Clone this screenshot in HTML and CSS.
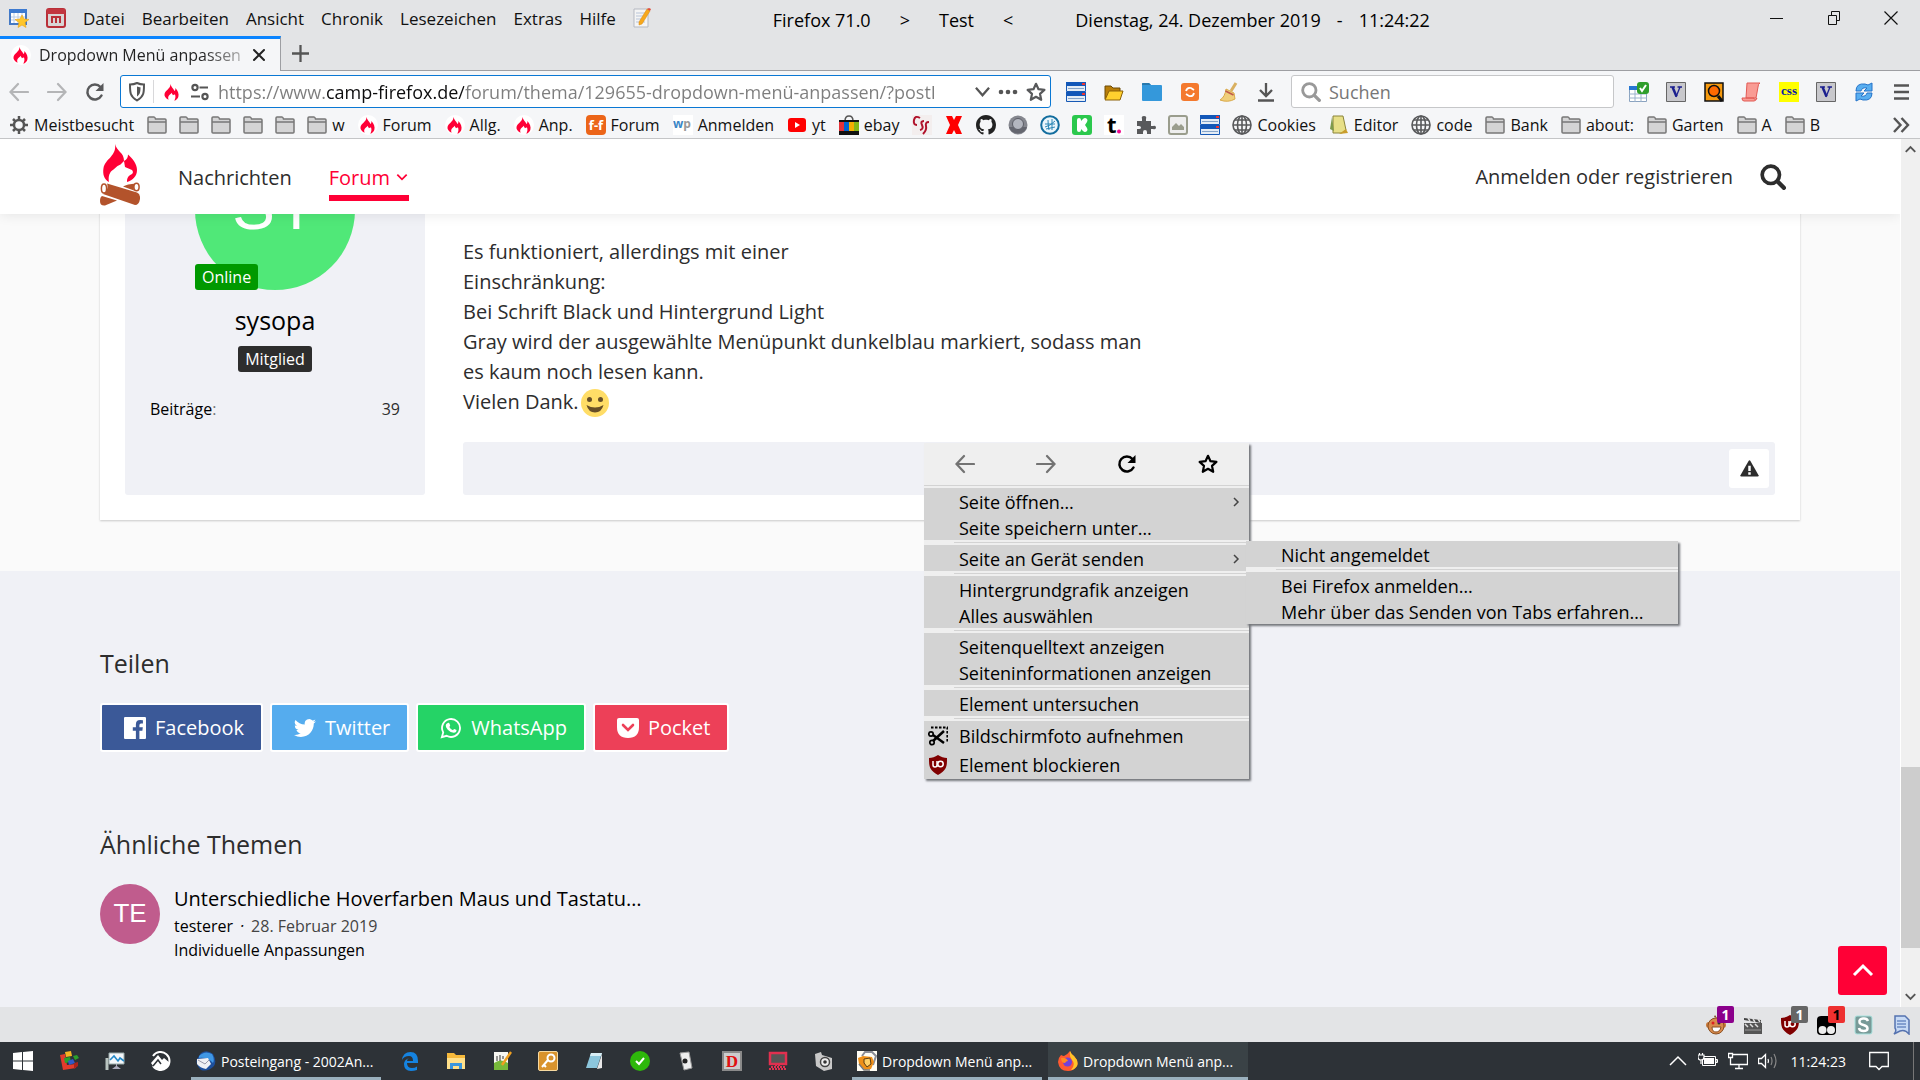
FILE: index.html
```html
<!DOCTYPE html>
<html lang="de">
<head>
<meta charset="utf-8">
<title>Dropdown Menü anpassen</title>
<link rel="stylesheet" href="styles.css">
</head>
<body>
<svg class="defs" aria-hidden="true">
  <symbol id="folder" viewBox="0 0 20 20"><path d="M1 17V3q0-1 1-1h5q1 0 1.500 2H18q1 0 1 1v12q0 1-1 1H2q-1 0-1-1z" fill="#d4d4d5" stroke="#777" stroke-width="1.500"/><path d="M1 7h18" stroke="#777" stroke-width="1.500"/></symbol>
  <symbol id="flame" viewBox="0 0 20 20"><circle cx="10" cy="10" r="10" fill="#fff"/><path d="M8.500 2c.5 3 3 4.500 4 7 1-.5.900-2 .8-3 2.500 2.500 4 6 3 9-.7 2-2 3-4 3.800 1.200-2.500 1.500-4.500.7-6.300-.8-.3-1.300.5-2 .8-.5-.8-1-1.500-1.700-2.500 0 1.500-2.500 2-3 4-.3 1 0 2.200.3 3C4 16.500 2 14.500 2.500 12c.7-3.800 6-5 6-10z" fill="#ff0036"/></symbol>
  <symbol id="back" viewBox="0 0 20 20"><path d="M19 10H2M9 2L1.500 10 9 18" fill="none" stroke="currentColor" stroke-width="2.200" stroke-linecap="round"/></symbol>
  <symbol id="forward" viewBox="0 0 20 20"><path d="M1 10h17M11 2l7.500 8-7.500 8" fill="none" stroke="currentColor" stroke-width="2.200" stroke-linecap="round"/></symbol>
  <symbol id="reload" viewBox="0 0 20 20"><path d="M16.500 13.500a7.500 7.500 0 1 1-1-8.500" fill="none" stroke="currentColor" stroke-width="2.500" stroke-linecap="round"/><path d="M18.500 1v8h-8z" fill="currentColor"/></symbol>
  <symbol id="star" viewBox="0 0 20 20"><path d="M10 1.800l2.500 5.400 5.900.7-4.400 4 1.200 5.900-5.200-3-5.200 3L6 11.900l-4.400-4 5.900-.7z" fill="none" stroke="currentColor" stroke-width="2.200" stroke-linejoin="round"/></symbol>
  <symbol id="windows2" viewBox="0 0 20 20"><path fill="#e4ecf5" d="M1 1h18v18H1z"/><path fill="#1257b8" d="M0 0h20v4H0zM0 10h20v4H0z"/><path d="M.5 1v8.500h19V1M.5 11v8.500h19V11" fill="none" stroke="#1659b5"/><path fill="#e33" d="M16 1h3v2h-3zM16 11h3v2h-3z"/><path stroke="#85a4c9" d="M2 6.500h16M2 16.500h16"/></symbol>
  <symbol id="globe" viewBox="0 0 20 20"><g fill="none" stroke="#58595b" stroke-width="1.600"><circle cx="10" cy="10" r="9"/><ellipse cx="10" cy="10" rx="4.500" ry="9"/><path d="M10 1v18M1 10h18M3 5h14M3 15h14"/></g></symbol>
  <symbol id="vbox" viewBox="0 0 20 20"><path fill="#c8c8cc" stroke="#666" d="M.5.5h19v19H.5z"/><path d="M4 5h5M11.500 5h4.500" stroke="#1b1f8f" stroke-width="1.500"/><path d="M6.500 5l4 9.500" stroke="#1b1f8f" stroke-width="2.500"/><path d="M10 15l4-10" stroke="#1b1f8f" stroke-width="1.300"/></symbol>
  <symbol id="ublock" viewBox="0 0 20 20"><path d="M10 0c3 2 6 3 9 3 0 8 0 12-9 17C1 15 1 11 1 3c3 0 6-1 9-3z" fill="#800000"/><path d="M5 6v4q0 2 2 2t2-2V6m0 0v6" fill="none" stroke="#fff" stroke-width="1.500"/><circle cx="12.500" cy="9" r="2.700" fill="none" stroke="#fff" stroke-width="1.500"/></symbol>
  <symbol id="search" viewBox="0 0 24 24"><circle cx="10" cy="10" r="8" fill="none" stroke="currentColor" stroke-width="3.400"/><path d="M16 16l6 6" stroke="currentColor" stroke-width="4" stroke-linecap="round"/></symbol>
  <symbol id="chev" viewBox="0 0 10 16"><path d="M3 4l4 4-4 4" fill="none" stroke="currentColor" stroke-width="1.500"/></symbol>
</svg>

<header class="menubar">
  <svg class="ic" viewBox="0 0 20 20"><path fill="#fff" stroke="#4579c4" stroke-width="2" d="M1 2h16v14H1z"/><path fill="#3d7ad0" d="M0 1h18v4H0z"/><path stroke="#b9cbe6" d="M5 5v10M9 5v10M13 5v10M2 9h14M2 12h14"/><path fill="#ffc62b" stroke="#eba314" stroke-width=".6" d="M13 7l2 4 5 .5-4 3 1 5-4-2.500-4 2.500 1-5-4-3 5-.5z"/></svg>
  <svg class="ic" viewBox="0 0 20 20"><rect x="1" y="1" width="18" height="18" rx="2" fill="#d9d5d5" stroke="#b92f38" stroke-width="2"/><path fill="#c23640" d="M1 1h18v5H1z"/><path fill="none" stroke="#b92f38" stroke-width="2" d="M6 15V9h4v6m0-6h4v6"/></svg>
  <nav class="menus">
    <button>Datei</button><button>Bearbeiten</button><button>Ansicht</button><button>Chronik</button><button>Lesezeichen</button><button>Extras</button><button>Hilfe</button>
  </nav>
  <svg class="ic" viewBox="0 0 20 20"><path fill="#f4f4f4" stroke="#b5b9c2" d="M1 1h14v18H1z"/><path stroke="#b8c4d8" d="M3 5h9M3 8h8M3 11h6M3 14h9"/><path fill="#f7a81c" stroke="#d98a10" stroke-width=".5" d="M14 1l3 2-8 13-3 1 0-3z"/><path fill="#e04a3a" d="M14 1l3 2 1-2-2-1z"/></svg>
  <div class="wintitle"><span>Firefox 71.0</span><span>&gt;</span><span>Test</span><span>&lt;</span><span class="date">Dienstag, 24. Dezember 2019</span><span class="dash">-</span><span>11:24:22</span></div>
  <div class="wincontrols">
    <button aria-label="Minimieren"><svg viewBox="0 0 14 14"><path d="M0 7.500h13" stroke="#111"/></svg></button>
    <button aria-label="Wiederherstellen"><svg viewBox="0 0 14 14"><path d="M1.500 4.500h8v9h-8zM4.500 4V.5h8v9h-3" fill="none" stroke="#111"/></svg></button>
    <button aria-label="Schließen"><svg viewBox="0 0 14 14"><path d="M.5.5l13 13M13.500.5l-13 13" stroke="#111" stroke-width="1.200"/></svg></button>
  </div>
</header>

<div class="tabs">
  <div class="tab"><svg class="ic"><use href="#flame"/></svg><span class="tabtext">Dropdown Menü anpassen</span><button aria-label="Tab schließen"><svg viewBox="0 0 14 14"><path d="M2 2l10 10M12 2L2 12" stroke="#222" stroke-width="2" stroke-linecap="round"/></svg></button></div>
  <button class="newtab" aria-label="Neuer Tab"><svg viewBox="0 0 18 18"><path d="M9 0v18M0 9h18" stroke="#555" stroke-width="2.400"/></svg></button>
</div>

<div class="toolbar">
  <div class="navbtns">
    <button class="dim" aria-label="Zurück"><svg class="ic"><use href="#back"/></svg></button>
    <button class="dim" aria-label="Vor"><svg class="ic"><use href="#forward"/></svg></button>
    <button aria-label="Neu laden"><svg class="ic"><use href="#reload"/></svg></button>
  </div>
  <div class="urlbar">
    <svg class="shield" viewBox="0 0 16 20"><path d="M8 1c2 1 4 1.500 7 1.500 0 8 0 12-7 16-7-4-7-8-7-16C4 2.500 6 2 8 1z" fill="none" stroke="#555" stroke-width="2"/><path d="M8 4.500c1.500.6 2 .7 3.500.8 0 5-.5 7-3.500 9.200z" fill="#555"/></svg>
    <i class="sep"></i>
    <svg class="ic"><use href="#flame"/></svg>
    <svg class="ic" viewBox="0 0 20 20"><g stroke="#555" stroke-width="2.200" fill="none"><circle cx="5" cy="5.500" r="2.600"/><path d="M9.500 5.500H18M1 14.500h9"/><circle cx="15" cy="14.500" r="2.600"/></g></svg>
    <input class="url" type="text" aria-label="Adresse" value="https://www.camp-firefox.de/forum/thema/129655-dropdown-menü-anpassen/?postI">
    <svg class="urlchev" viewBox="0 0 16 16"><path d="M1 4l7 8 7-8" fill="none" stroke="#555" stroke-width="2.400"/></svg>
    <svg class="ic" viewBox="0 0 20 20"><g fill="#555"><circle cx="3" cy="10" r="2.300"/><circle cx="10" cy="10" r="2.300"/><circle cx="17" cy="10" r="2.300"/></g></svg>
    <svg class="ic grey"><use href="#star"/></svg>
  </div>
  <div class="tools">
    <svg class="ic"><use href="#windows2"/></svg>
    <svg class="ic" viewBox="0 0 20 20"><path d="M1 17V4h6l2 2h7v3" fill="#b87d08" stroke="#6b4a06"/><path d="M1 18L5 9h14l-3 9z" fill="#ffd02e" stroke="#8b6108"/></svg>
    <svg class="ic" viewBox="0 0 20 20"><path d="M0 2q0-1 1-1h6l2 2h10q1 0 1 1v14q0 1-1 1H1q-1 0-1-1z" fill="#3498db"/><path d="M0 2q0-1 1-1h6l2 2H0z" fill="#2878ad"/></svg>
    <svg class="ic" viewBox="0 0 20 20"><rect x="1" y="1" width="18" height="18" rx="3" fill="#f4792e"/><path d="M6 9q1-4 5-3l3 2M14 11q-1 4-5 3l-3-2" fill="none" stroke="#fff" stroke-width="1.800"/></svg>
    <svg class="ic" viewBox="0 0 20 20"><path d="M18 1l-5 8" stroke="#d9b060" stroke-width="3"/><path d="M8 7l8 4 1 6q-7 4-15 1 5-3 6-11z" fill="#f0cf7a" stroke="#d9a94a"/><path d="M7.500 9l8 4" stroke="#c05a4a" stroke-width="1.800"/></svg>
    <svg class="ic" viewBox="0 0 20 20"><path d="M10 1v12M4 8l6 6 6-6M2 18.500h16" fill="none" stroke="#555" stroke-width="2.300"/></svg>
  </div>
  <label class="searchbox"><svg class="ic"><use href="#search"/></svg><input type="search" placeholder="Suchen" aria-label="Suchen"></label>
  <div class="tools addons">
    <svg class="ic" viewBox="0 0 20 20"><path fill="#fff" stroke="#8aa3c0" d="M.5 4.500h17v15H.5z"/><path fill="#2676d2" d="M0 4h12v4H0z"/><path stroke="#9bb2cc" d="M0 12h18M0 16h18M6 8v12M12 8v12"/><rect x="8" y="0" width="12" height="12" rx="3" fill="#2f9e2c"/><path d="M11 6l2 3 4-6" fill="none" stroke="#fff" stroke-width="2"/></svg>
    <svg class="ic"><use href="#vbox"/></svg>
    <svg class="ic" viewBox="0 0 20 20"><path fill="#f79a0e" stroke="#111" stroke-width="1.500" d="M1 1h18v18H1z"/><circle cx="10" cy="9" r="5.500" fill="#ff6a00" stroke="#111" stroke-width="1.500"/><path d="M14 14l4 5" stroke="#111" stroke-width="3"/></svg>
    <svg class="ic" viewBox="0 0 20 20"><path d="M6 1h13q-2 1-2 4l-2 11H5zM1 16h12q0 3 3 0-1 3-3 3H3q-2 0-2-3z" fill="#f99b94" stroke="#e25a55"/></svg>
    <svg class="ic" viewBox="0 0 20 20"><path fill="#ff0" d="M0 0h20v20H0z"/><text x="10" y="13" text-anchor="middle" class="csstxt">css</text></svg>
    <svg class="ic"><use href="#vbox"/></svg>
    <svg class="ic" viewBox="0 0 20 20"><path d="M2 9q0-8 9-7l3 1 4-2v8h-8l3-3q-5-1-6 3zM18 11q0 8-9 7l-3-1-4 2v-8h8l-3 3q5 1 6-3z" fill="#58aef0" stroke="#2473c9"/></svg>
    <svg class="ic" viewBox="0 0 20 20"><path d="M3 3.500h15M3 10h15M3 16.500h15" stroke="#555" stroke-width="2.500"/></svg>
  </div>
</div>

<nav class="bookmarks">
  <a href="#"><svg class="ic" viewBox="0 0 20 20"><circle cx="10" cy="10" r="5" fill="none" stroke="#555" stroke-width="2.500"/><path d="M10 1v4M10 15v4M1 10h4M15 10h4M4 4l2.500 2.500M13.500 13.500L16 16M4 16l2.500-2.500M13.500 6.500L16 4" stroke="#555" stroke-width="2.500"/></svg><span>Meistbesucht</span></a>
  <a href="#" aria-label="Ordner 1"><svg class="ic"><use href="#folder"/></svg></a>
  <a href="#" aria-label="Ordner 2"><svg class="ic"><use href="#folder"/></svg></a>
  <a href="#" aria-label="Ordner 3"><svg class="ic"><use href="#folder"/></svg></a>
  <a href="#" aria-label="Ordner 4"><svg class="ic"><use href="#folder"/></svg></a>
  <a href="#" aria-label="Ordner 5"><svg class="ic"><use href="#folder"/></svg></a>
  <a href="#"><svg class="ic"><use href="#folder"/></svg><span>w</span></a>
  <a href="#"><svg class="ic"><use href="#flame"/></svg><span>Forum</span></a>
  <a href="#"><svg class="ic"><use href="#flame"/></svg><span>Allg.</span></a>
  <a href="#"><svg class="ic"><use href="#flame"/></svg><span>Anp.</span></a>
  <a href="#"><svg class="ic" viewBox="0 0 20 20"><rect width="20" height="20" rx="4" fill="#ec6519"/><text x="10" y="15" text-anchor="middle" class="fftxt">f-f</text></svg><span>Forum</span></a>
  <a href="#"><svg class="ic" viewBox="0 0 20 20"><path fill="#fff" d="M0 0h20v20H0z"/><text x="0" y="13" class="wptxt"><tspan fill="#3b86c6">w</tspan><tspan fill="#999">p</tspan></text></svg><span>Anmelden</span></a>
  <a href="#"><svg class="ic" viewBox="0 0 20 20"><rect x="1" y="3" width="18" height="14" rx="3" fill="#f00"/><path fill="#fff" d="M8 7v6l5-3z"/></svg><span>yt</span></a>
  <a href="#"><svg class="ic" viewBox="0 0 20 20"><path d="M6 6q0-5 4-5t4 5" fill="none" stroke="#555" stroke-width="1.500"/><path d="M0 5h20v15H0z" fill="#111"/><path fill="#e53238" d="M0 7h5v9H0z"/><path fill="#0064d2" d="M5 7h5v9H5z"/><path fill="#f5af02" d="M10 7h5v9h-5z"/><path fill="#86b817" d="M15 7h5v9h-5z"/></svg><span>ebay</span></a>
  <a href="#" aria-label="CSS"><svg class="ic" viewBox="0 0 20 20"><path fill="#f3eeee" d="M0 0h20v20H0z"/><path d="M8 3q-5-3-6 2t3 5M12 6q-4 0-2 4t-2 5M17 7q-4 0-3 4t-3 8" fill="none" stroke="#b0122b" stroke-width="2"/></svg></a>
  <a href="#" aria-label="X"><svg class="ic" viewBox="0 0 20 20"><path d="M2 1h6l2 4 2-4h6l-4 9 4 9h-6l-2-4-2 4H2l4-9z" fill="#f00"/></svg></a>
  <a href="#" aria-label="GitHub"><svg class="ic" viewBox="0 0 16 16"><path fill="#222" d="M8 0C3.580 0 0 3.580 0 8c0 3.540 2.290 6.530 5.470 7.590.4.070.55-.17.55-.38 0-.19-.01-.82-.01-1.490-2.010.37-2.530-.49-2.690-.94-.09-.23-.48-.94-.82-1.130-.28-.15-.68-.52-.01-.53.63-.01 1.080.58 1.230.82.72 1.210 1.870.87 2.330.66.07-.52.28-.87.51-1.070-1.780-.2-3.640-.89-3.640-3.950 0-.87.31-1.590.82-2.150-.08-.2-.36-1.020.08-2.120 0 0 .67-.21 2.200.82.64-.18 1.320-.27 2-.27s1.360.09 2 .27c1.530-1.040 2.200-.82 2.200-.82.44 1.100.16 1.920.08 2.120.51.56.82 1.270.82 2.150 0 3.070-1.870 3.750-3.650 3.950.29.25.54.73.54 1.480 0 1.070-.01 1.930-.01 2.200 0 .21.15.46.55.38A8.010 8.010 0 0 0 16 8c0-4.420-3.580-8-8-8z"/></svg></a>
  <a href="#" aria-label="Kreis"><svg class="ic" viewBox="0 0 20 20"><circle cx="10" cy="10" r="9.500" fill="#85878f"/><path d="M1 12a9.500 9.500 0 0 0 18 0z" fill="#64666f"/><circle cx="10" cy="9" r="5.500" fill="#b3b6bf" stroke="#5b5d66"/></svg></a>
  <a href="#" aria-label="Netz"><svg class="ic" viewBox="0 0 20 20"><circle cx="10" cy="10" r="8.800" fill="#eaf5fb" stroke="#126d9e" stroke-width="2"/><path d="M5 12q5-1 10-6M5 9q6 0 10 0M8 5q0 5 1 10M12 4q0 6 0 11M6 14l9-2" fill="none" stroke="#2a86b5"/></svg></a>
  <a href="#" aria-label="Kickstarter"><svg class="ic" viewBox="0 0 20 20"><rect width="20" height="20" rx="3" fill="#2bc84d"/><path d="M5 5q0-2 2-2t2 2v1l2-2q2-2 4 0 1 1 0 3l-2 3 2 3q1 2 0 3-2 2-4 0l-2-2v1q0 2-2 2t-2-2z" fill="#fff"/></svg></a>
  <a href="#" aria-label="t."><svg class="ic" viewBox="0 0 20 20"><path fill="#fff" d="M0 0h20v20H0z"/><text x="3" y="18" class="ttxt">t</text><circle cx="15" cy="16.500" r="2" fill="#f0078c"/></svg></a>
  <a href="#" aria-label="Add-ons"><svg class="ic" viewBox="0 0 20 20"><path d="M1 6h5V4q-1-3 2-3t2 3v2h5v5h2q3-1 3 1.500T17 14h-2v5h-4v-2q0-2-2-2t-2 2v2H1v-5h2q2 0 2-1.500T3 11H1z" fill="#58595b"/></svg></a>
  <a href="#" aria-label="Bild"><svg class="ic" viewBox="0 0 20 20"><rect x="1" y="1" width="18" height="18" rx="2" fill="#eee" stroke="#9a9d8d" stroke-width="2"/><path d="M4 15V12l4-4 3 3 2-2 3 3v3z" fill="#9a9d8d"/></svg></a>
  <a href="#" aria-label="Fenster"><svg class="ic"><use href="#windows2"/></svg></a>
  <a href="#"><svg class="ic"><use href="#globe"/></svg><span>Cookies</span></a>
  <a href="#"><svg class="ic" viewBox="0 0 20 20"><path d="M4 1h10l3 14-4 3H4z" fill="#e7df87" stroke="#8a843a"/><path d="M3 2l2 14-4-2z" fill="#7e9a4a"/><path d="M10 19l9-1-2-4z" fill="#c99d2b"/></svg><span>Editor</span></a>
  <a href="#"><svg class="ic"><use href="#globe"/></svg><span>code</span></a>
  <a href="#"><svg class="ic"><use href="#folder"/></svg><span>Bank</span></a>
  <a href="#"><svg class="ic"><use href="#folder"/></svg><span>about:</span></a>
  <a href="#"><svg class="ic"><use href="#folder"/></svg><span>Garten</span></a>
  <a href="#"><svg class="ic"><use href="#folder"/></svg><span>A</span></a>
  <a href="#"><svg class="ic"><use href="#folder"/></svg><span>B</span></a>
  <button class="overflow" aria-label="Weitere Lesezeichen"><svg class="ic" viewBox="0 0 20 20"><path d="M3 3l6.500 7L3 17M10.500 3l6.500 7-6.500 7" fill="none" stroke="#555" stroke-width="2.400"/></svg></button>
</nav>

<div class="viewport">
  <div class="page">
    <header class="site">
      <svg class="logo" viewBox="0 0 40 62"><path d="M15 0c1 4 3 5.500 5 8 2.500 2 4 5 4 9 3-1.500 4-3.500 4-6.500 5 4.500 9 9.500 9 15.500 0 6-4 10-10 12 0-4 1-6 5-8 1.500-1 1-3 0-4l-7-3-1-6-3.500 3.500-3 1.500-4 3.500c-4 2-5.500 7-4.500 12.500-5-2.500-6.500-8-5.500-14C5 15 17 12 15 0z" fill="#ff0036"/><g fill="#b3532b"><path d="M7 39.500l30 9q3.500 1.500 3 6.500-1 6-5 6L3 50q3-1 4-4.500t0-6z"/><path d="M36 39.500q-9 .5-13 3l11 4q-1-3 2-7z"/><path d="M2 52l15 4.500L5 61.500q-5 .5-5-4.500 0-4 2-5z"/></g><ellipse cx="4" cy="44.500" rx="2.600" ry="4.600" fill="#fff" stroke="#b3532b" stroke-width="1.500"/><ellipse cx="36.500" cy="43" rx="2.600" ry="3.800" fill="#fff" stroke="#b3532b" stroke-width="1.500"/></svg>
      <nav>
        <a href="#">Nachrichten</a>
        <a href="#" class="active">Forum<svg viewBox="0 0 12 12"><path d="M2 4l4 4 4-4" fill="none" stroke="currentColor" stroke-width="1.500"/></svg></a>
      </nav>
      <a href="#" class="login">Anmelden oder registrieren</a>
      <button aria-label="Suche"><svg viewBox="0 0 24 24"><use href="#search"/></svg></button>
    </header>
    <main>
      <article class="card">
        <aside class="author">
          <div class="avatar">SY<span class="badge online">Online</span></div>
          <a href="#" class="name">sysopa</a>
          <span class="badge">Mitglied</span>
          <dl><dt>Beiträge<i>:</i></dt><dd>39</dd></dl>
        </aside>
        <div class="post">
          <p>Es funktioniert, allerdings mit einer<br>Einschränkung:<br>Bei Schrift Black und Hintergrund Light<br>Gray wird der ausgewählte Menüpunkt dunkelblau markiert, sodass man<br>es kaum noch lesen kann.<br>Vielen Dank.<svg class="smiley" viewBox="0 0 28 28"><circle cx="14" cy="14" r="14" fill="#ffdd67"/><g fill="#664e27"><circle cx="8.500" cy="10.500" r="2.500"/><circle cx="19.500" cy="10.500" r="2.500"/><path d="M5.500 16q8.500 5 17 0-2 7.500-8.500 7.500T5.500 16z"/></g></svg></p>
          <footer><button aria-label="Inhalt melden"><svg viewBox="0 0 20 20"><path d="M9 2q1-1.500 2 0l8.500 15q.5 1.500-1 1.500h-17q-1.500 0-1-1.500z" fill="#2d2d2d"/><path d="M10 7v5.500M10 14v2.500" stroke="#fff" stroke-width="2.600"/></svg></button></footer>
        </div>
      </article>
    </main>
    <section class="bottom">
      <h2>Teilen</h2>
      <div class="share">
        <button class="fb"><svg viewBox="0 0 20 20"><path d="M1 0h18q1 0 1 1v18q0 1-1 1h-5v-7.500h2.700l.4-3.200H14V7.400q0-1.500 1.500-1.500h1.700V3q-1-.2-2.500-.2-3.900 0-3.900 4v2.500H8v3.200h2.800V20H1q-1 0-1-1V1q0-1 1-1z" fill="#fff"/></svg>Facebook</button>
        <button class="tw"><svg viewBox="0 0 24 24"><path d="M23.950 4.570a10 10 0 0 1-2.820.77 4.960 4.960 0 0 0 2.160-2.720c-.95.55-2 .95-3.130 1.180a4.920 4.920 0 0 0-8.380 4.480C7.690 8.090 4.070 6.130 1.640 3.160a4.920 4.920 0 0 0 1.520 6.570 4.900 4.900 0 0 1-2.230-.61v.06a4.920 4.920 0 0 0 3.950 4.830 5 5 0 0 1-2.210.08 4.940 4.940 0 0 0 4.600 3.420A9.870 9.870 0 0 1 0 19.540a13.990 13.990 0 0 0 7.550 2.210c9.140 0 14.300-7.720 14.010-14.600a10 10 0 0 0 2.390-2.580z" fill="#fff"/></svg>Twitter</button>
        <button class="wa"><svg viewBox="0 0 24 24"><path d="M2 22l1.500-5.200A9.800 9.800 0 1 1 7.200 20.500z" fill="none" stroke="#fff" stroke-width="2"/><path d="M8.500 6.500q1.500-.5 2 1l.6 1.600q.1.700-.9 1.700 1.200 2.500 4 3.600 1-1.400 1.500-1.300l2.300 1.200q.3 2.700-3 3-3.500 0-6.500-3.300-4.500-5.500 0-7.500z" fill="#fff"/></svg>WhatsApp</button>
        <button class="po"><svg viewBox="0 0 22 20"><path d="M2 0h18q2 0 2 2v7q0 11-11 11T0 9V2q0-2 2-2z" fill="#fff"/><path d="M6 7l5 5 5-5" fill="none" stroke="#ed4058" stroke-width="2.600" stroke-linecap="round"/></svg>Pocket</button>
      </div>
      <h2>Ähnliche Themen</h2>
      <div class="topic">
        <div class="mini">TE</div>
        <div><a href="#" class="ttl">Unterschiedliche Hoverfarben Maus und Tastatu…</a><p class="meta"><a href="#">testerer</a><i>·</i><span>28. Februar 2019</span></p><p><a href="#">Individuelle Anpassungen</a></p></div>
      </div>
    </section>
    <button class="totop" aria-label="Nach oben"><svg viewBox="0 0 24 24"><path d="M3 16l9-9 9 9" fill="none" stroke="#fff" stroke-width="3"/></svg></button>
  </div>
  <div class="scrollbar">
    <svg viewBox="0 0 20 20"><path d="M5 13l5-5 5 5" fill="none" stroke="#555" stroke-width="2"/></svg>
    <div class="track"><div class="thumb"></div></div>
    <svg viewBox="0 0 20 20"><path d="M5 7l5 5 5-5" fill="none" stroke="#555" stroke-width="2"/></svg>
  </div>
</div>

<div class="statusbar">
  <span class="ext"><svg class="ic" viewBox="0 0 20 20"><path d="M8 2l1-2 2 3z" fill="#7a4a20"/><circle cx="3" cy="10" r="3" fill="#c97a3c"/><circle cx="17" cy="10" r="3" fill="#c97a3c"/><circle cx="10" cy="11" r="8" fill="#d98a4c" stroke="#8a5022"/><path d="M6 12h9q-1 5-5 5t-4-5z" fill="#fff" stroke="#8a5022"/><circle cx="7" cy="8" r="1.500" fill="#d22"/><circle cx="13" cy="8" r="1.500" fill="#333"/></svg><b class="purple">1</b></span>
  <svg class="ic" viewBox="0 0 20 20"><path d="M1 8h18v11H1z" fill="#555"/><path d="M1 3l17 2v3L1 5z" fill="#444"/><path d="M2 9l3 3M7 9l3 3M12 9l3 3M5 3l2 3M10 4l2 3M15 4l2 3" stroke="#ddd" stroke-width="1.500"/><path d="M2 15h16" stroke="#999"/></svg>
  <span class="ext"><svg class="ic"><use href="#ublock"/></svg><b class="gray">1</b></span>
  <span class="ext"><svg class="ic" viewBox="0 0 20 20"><rect y="1" width="19" height="19" rx="4" fill="#000"/><circle cx="5.500" cy="15" r="4" fill="#eee"/><circle cx="14" cy="15" r="4" fill="#eee"/></svg><b class="red">1</b></span>
  <svg class="ic" viewBox="0 0 20 20"><rect x="1" y="1" width="17" height="18" rx="2" fill="#789a98" stroke="#a9e3df"/><path d="M14 6q-1-3-5-2.500T5.500 7q0 2 4 3t4 3.500-4 2.500q-4 0-4.500-3" fill="none" stroke="#fff" stroke-width="2.500"/></svg>
  <svg class="ic" viewBox="0 0 20 20"><path d="M4 1h10l4 4v14q-4-5-9-3l-6 3q3-3 1-6z" fill="#c7daf5" stroke="#5673b0" stroke-width="1.500"/><path d="M6 6h9M6 9h9M6 12h9" stroke="#6d8cc4" stroke-width="1.500"/></svg>
</div>

<footer class="taskbar">
  <button aria-label="Start"><svg class="ic" viewBox="0 0 20 20"><path fill="#fff" d="M0 2l9-1v8.500H0zM10 1l10-1v9.500H10zM0 10.500h9V19l-9-1zM10 10.500h10V20l-10-1z"/></svg></button>
  <button aria-label="Bausteine"><svg class="ic" viewBox="0 0 20 20"><path fill="#e33b2c" d="M1 4l5-1 2 11 9-1v4L4 19z"/><path fill="#f5b521" d="M6 1l6-1 1 5-6 1z"/><path fill="#2ba02b" d="M5 7l6-1 1 5-6 1zM14 5l4-1 2 3-4 2z"/><path fill="#3158c9" d="M9 10l5-2 2 4-6 2z"/><path fill="#a8241b" d="M15 12l4-1v4l-4 3z"/></svg></button>
  <button aria-label="Monitor"><svg class="ic" viewBox="0 0 20 20"><path fill="#f4f7fa" stroke="#9aa" d="M4 2h15v11H4z"/><path d="M5 9l4-4 4 5 2-3 4 3" fill="none" stroke="#2489c8" stroke-width="1.600"/><path d="M11 13v2l-4 3h9l-4-3v-2" fill="#aab"/><path d="M2 7v12" stroke="#b9c4c0" stroke-width="3"/></svg></button>
  <button aria-label="Bilder"><svg class="ic" viewBox="0 0 20 20"><path d="M2 5a9 9 0 1 1 0 10" fill="none" stroke="#fff" stroke-width="2"/><path d="M0 12l7-8 4 5 2-2 6 5q-3 6-9 6.500T0 12z" fill="#fff"/><path d="M2 15l5-6 3 4" fill="none" stroke="#2d3237" stroke-width="1.500"/></svg></button>
  <button class="task mail"><svg class="ic" viewBox="0 0 20 20"><path d="M5 2q6-4 12 1 4 7 1 12-6 6-13 4Q-1 13 1 8z" fill="#1d4f9c"/><path d="M3 5q6-6 13-2 3 5 1 9Q12 6 3 7z" fill="#3f97e4"/><path d="M1 8l11-1 3 6-5 5q-6-1-9-5z" fill="#eef0f4"/><path d="M2 9l7 4 4-4" fill="none" stroke="#99a"/></svg>Posteingang - 2002An...</button>
  <button aria-label="Edge"><svg class="ic" viewBox="0 0 20 20"><path d="M2 9Q3 1 10.500 1 18 1 18 10v2H7q0 5 5 5 3 0 5-1.500v3.500q-3 1-6 1-7 0-7-7 0-4 5-6-2 1-2 3h6q0-5-4-5-5 0-7 4z" fill="#1583e0"/></svg></button>
  <button aria-label="Explorer"><svg class="ic" viewBox="0 0 20 20"><path fill="#f6b93b" d="M1 2h7l2 2h9v14H1z"/><path fill="#ffe08a" d="M1 7h18v11H1z"/><path fill="#3a96dd" d="M4 18v-6h12v6h-3v-3H7v3z"/></svg></button>
  <button aria-label="Editor"><svg class="ic" viewBox="0 0 20 20"><path fill="#f7f7f2" d="M2 1h14v18H2z"/><path fill="#77b83a" d="M2 12q7-5 14 0v7H2z"/><path stroke="#333" d="M5 5v5M8 4v6M11 5v3"/><path d="M19 1L10 14" stroke="#f0a020" stroke-width="2.500"/></svg></button>
  <button aria-label="Schlüssel"><svg class="ic" viewBox="0 0 20 20"><rect x=".5" y=".5" width="19" height="19" rx="1.500" fill="#d9932c" stroke="#f6d9a0"/><circle cx="13" cy="7" r="3.500" fill="none" stroke="#fff" stroke-width="2"/><path d="M10 9l-6 7M6 14l2 2" stroke="#fff" stroke-width="2"/></svg></button>
  <button aria-label="Notizen"><svg class="ic" viewBox="0 0 20 20"><path d="M7 2h11l-5 15H2z" fill="#8cc6dc"/><path d="M7 2h11l-1 3H6z" fill="#d8eef5"/><path d="M18 3v14l-5 1z" fill="#e8e8e8"/></svg></button>
  <button aria-label="Sicherheit"><svg class="ic" viewBox="0 0 20 20"><circle cx="10" cy="10" r="10" fill="#2eb80b"/><path d="M6 10l3 3 5-6" fill="none" stroke="#fff" stroke-width="2"/></svg></button>
  <button aria-label="Karten"><svg class="ic" viewBox="0 0 20 20"><path d="M4 2l9-1 3 16-8 2z" fill="#eee" stroke="#999"/><circle cx="9" cy="10" r="2.500" fill="#222"/></svg></button>
  <button aria-label="D"><svg class="ic" viewBox="0 0 20 20"><path fill="#ccc" stroke="#8a8a8a" stroke-width="2" d="M1 1h18v18H1z"/><text x="10" y="16" text-anchor="middle" class="dtxt">D</text></svg></button>
  <button aria-label="Rechner"><svg class="ic" viewBox="0 0 20 20"><path d="M2 2h16v11H2z" fill="#555" stroke="#e0304f" stroke-width="2.500"/><path d="M7 14h6M1 18h18M3 16h14" stroke="#e0304f" stroke-width="2" stroke-dasharray="2 1"/></svg></button>
  <button aria-label="Kamera"><svg class="ic" viewBox="0 0 20 20"><path d="M1 3l6-2 1 3 10 3v11l-8 2-8-5z" fill="#c8c8c8"/><circle cx="11" cy="11" r="4.500" fill="#eee" stroke="#444" stroke-width="1.500"/><circle cx="11" cy="11" r="1.800" fill="#333"/></svg></button>
  <button class="task first"><svg class="ic" viewBox="0 0 20 20"><path fill="#fffdf4" d="M0 0h20v20H0z"/><path d="M5 5L8 1h7l4 4-3 9" fill="none" stroke="#8a8d96" stroke-width="2"/><path d="M1 7l5-2 9 1 2 5-3 7-6 1-6-6z" fill="#ef9018"/><path d="M7 8l6-1 1 6-4 3-3-4z" fill="#ffd066" stroke="#5a3a10"/><path d="M2 13l5 6h6" fill="none" stroke="#777" stroke-width="1.500"/></svg>Dropdown Menü anp...</button>
  <button class="task current"><svg class="ic" viewBox="0 0 20 20"><path d="M3 4q2 1 3 1 3-1 6-5 1 3 4 5 5 5 3 10-3 5-9 5Q1 20 0 11q0-4 3-7z" fill="#ff5a30"/><path d="M12 0q1 3 4 5 5 5 3 10-3 4-6 4 5-6 1-10-3-3-2-9z" fill="#ffc328"/><circle cx="9.500" cy="11" r="4.500" fill="#7340d8"/><path d="M3 7q5-1 7 3-2 0-3 2-4 0-4-5z" fill="#ff8a20"/></svg>Dropdown Menü anp...</button>
  <div class="tray">
    <svg class="ic" viewBox="0 0 20 20"><path d="M2 14l8-8 8 8" fill="none" stroke="#fff" stroke-width="1.500"/></svg>
    <svg class="ic" viewBox="0 0 20 20"><path d="M4.500 5.500h13v9h-13zM18 8.500h1.500v3H18z" fill="none" stroke="#fff"/><path fill="#fff" d="M6 7h10v6H6z"/><path d="M0 4h6v2q0 3-3 3T0 6zM1.500 2v2M4.500 2v2M3 9v4" stroke="#fff" stroke-width="1.200" fill="#2d3237"/></svg>
    <svg class="ic" viewBox="0 0 20 20"><path d="M4 3.500h15.500v10H2.500V7M11 14v3M7 17.500h8M.5 2.500h4v4h-4z" fill="none" stroke="#fff" stroke-width="1.300"/></svg>
    <svg class="ic" viewBox="0 0 20 20"><path d="M.5 7.500h3l4-4v13l-4-4h-3z" fill="none" stroke="#fff" stroke-width="1.300"/><path d="M10 8q1 2 0 4" fill="none" stroke="#fff" stroke-width="1.200"/><path d="M13 6q2 4 0 8M16 3q4 7 0 14" fill="none" stroke="#888" stroke-width="1.200"/></svg>
    <time>11:24:23</time>
    <svg class="ic" viewBox="0 0 20 20"><path d="M.7 1.500h18.600v14H13l-3 3-3-3H.7z" fill="none" stroke="#fff" stroke-width="1.300"/></svg>
  </div>
</footer>

<div class="ctx main">
  <div class="ctxnav">
    <button class="dim" aria-label="Zurück"><svg class="ic"><use href="#back"/></svg></button>
    <button class="dim" aria-label="Vor"><svg class="ic"><use href="#forward"/></svg></button>
    <button aria-label="Neu laden"><svg class="ic"><use href="#reload"/></svg></button>
    <button aria-label="Lesezeichen"><svg class="ic"><use href="#star"/></svg></button>
  </div>
  <button>Seite öffnen…<svg class="arr"><use href="#chev"/></svg></button>
  <button>Seite speichern unter…</button>
  <hr>
  <button>Seite an Gerät senden<svg class="arr"><use href="#chev"/></svg></button>
  <hr>
  <button>Hintergrundgrafik anzeigen</button>
  <button>Alles auswählen</button>
  <hr>
  <button>Seitenquelltext anzeigen</button>
  <button>Seiteninformationen anzeigen</button>
  <hr>
  <button>Element untersuchen</button>
  <hr>
  <button class="tall"><svg class="ic" viewBox="0 0 20 20"><path d="M3 1.500h16.500v14" fill="none" stroke="#000" stroke-width="2.200" stroke-dasharray="2.500 1.500"/><circle cx="3" cy="8" r="2.200" fill="none" stroke="#000" stroke-width="1.700"/><circle cx="4" cy="16.500" r="2.200" fill="none" stroke="#000" stroke-width="1.700"/><path d="M5 9l11 8M5 15L16 5" stroke="#000" stroke-width="2.500"/></svg>Bildschirmfoto aufnehmen</button>
  <button class="tall"><svg class="ic"><use href="#ublock"/></svg>Element blockieren</button>
</div>
<div class="ctx sub">
  <button>Nicht angemeldet</button>
  <hr>
  <button>Bei Firefox anmelden…</button>
  <button>Mehr über das Senden von Tabs erfahren…</button>
</div>
</body>
</html>
```
FILE: styles.css
```css
* { box-sizing: border-box; }
body {
  margin: 0;
  height: 100vh;
  display: flex;
  flex-direction: column;
  overflow: hidden;
  font-family: "Open Sans", "Noto Sans", sans-serif;
  font-size: 16px;
  color: #111;
}
button { font: inherit; color: inherit; background: none; border: 0; padding: 0; display: flex; align-items: center; }
a { color: inherit; text-decoration: none; }
svg { display: block; flex: none; }
.defs { position: absolute; width: 0; height: 0; }
.ic { width: 20px; height: 20px; }
.dim { color: #b4b5b7; }
.grey { color: #58595b; }

/* title and menu bar */
.menubar { height: 36px; flex: none; background: #e3e4e6; display: flex; align-items: center; padding: 0 22px 0 9px; gap: 17px; }
.menus { display: flex; gap: 17px; font-size: 17px; }
.wintitle { display: flex; gap: 29px; margin-left: 103px; padding-top: 3px; font-weight: 500; font-size: 18px; color: #000; white-space: nowrap; }
.wintitle .date { margin-left: 33px; }
.wintitle .dash, .wintitle .dash + span { margin-left: -13px; }
.wincontrols { margin-left: auto; display: flex; gap: 43px; }
.wincontrols svg { width: 14px; height: 14px; }

/* tab strip */
.tabs { height: 35px; flex: none; background: #e3e4e6; display: flex; border-bottom: 1px solid #9d9ea2; }
.tab { width: 281px; height: 35px; border-top: 3px solid #0a84ff; border-right: 1px solid #9d9ea2; background: #f5f6f8; display: flex; align-items: center; gap: 8px; padding: 0 14px 0 11px; font-size: 16px; }
.tabtext { flex: 1; overflow: hidden; white-space: nowrap; background: linear-gradient(90deg, #222 80%, #bbb); background-clip: text; color: transparent; }
.tab button svg { width: 14px; height: 14px; }
.newtab { padding: 0 11px; }
.newtab svg { width: 17px; height: 17px; }

/* navigation toolbar */
.toolbar { height: 41px; flex: none; background: #f5f6f8; display: flex; align-items: center; padding: 0 9px; gap: 15px; }
.navbtns { display: flex; gap: 18px; color: #58595b; }
.urlbar { flex: 1; min-width: 0; height: 33px; background: #fff; border: 1px solid #0a78d4; border-radius: 3px; display: flex; align-items: center; padding: 0 4px 0 8px; gap: 8px; }
.shield { width: 16px; height: 20px; }
.sep { width: 1px; height: 23px; background: #d8d8da; }
.urlchev { width: 15px; height: 15px; }
.url { flex: 1; min-width: 0; border: 0; outline: 0; padding: 0; font: inherit; font-size: 18px; height: 28px; color: transparent; background: linear-gradient(90deg, #7d7d7d 109px, #0c0c0d 109px, #0c0c0d 246px, #7d7d7d 246px); background-clip: text; }
.tools { display: flex; gap: 18px; }
.addons { width: 282px; gap: 0; justify-content: space-between; }
.searchbox { width: 323px; height: 33px; background: #fff; border: 1px solid #c6c7c9; border-radius: 3px; display: flex; align-items: center; gap: 8px; padding: 0 9px; color: #999; }
.searchbox input { flex: 1; min-width: 0; border: 0; outline: 0; padding: 0; font: inherit; font-size: 18px; background: none; }
.searchbox input::placeholder { color: #777; }
.csstxt { font: 700 13px "Liberation Serif", serif; fill: #0b1ba8; }
.fftxt { font: 700 13px "Open Sans", sans-serif; fill: #fff; }
.wptxt { font: 700 12px "Open Sans", sans-serif; }
.ttxt { font: 700 22px "Open Sans", sans-serif; fill: #000; }
.dtxt { font: 700 17px "Liberation Serif", serif; fill: #e01010; }

/* bookmarks toolbar */
.bookmarks { height: 27px; flex: none; background: #f5f6f8; border-bottom: 1px solid #c4c5c7; display: flex; align-items: center; gap: 12px; padding: 0 9px; line-height: 20px; white-space: nowrap; }
.bookmarks a { display: flex; align-items: center; gap: 5px; }
.bookmarks span { padding-right: 1px; }
.overflow { margin-left: auto; }

/* web page */
.viewport { flex: 1; min-height: 0; display: flex; }
.page { flex: 1; min-width: 0; position: relative; overflow: hidden; background: #fafafa; color: #2d2d2d; display: flex; flex-direction: column; }
.site { position: relative; z-index: 1; height: 75px; flex: none; background: #fff; box-shadow: 0 1px 12px rgba(0, 0, 0, .09); display: flex; align-items: center; padding: 0 114px 0 100px; font-size: 20px; }
.logo { width: 40px; height: 62px; margin-bottom: 4px; }
.site nav { display: flex; gap: 37px; margin-left: 38px; align-self: stretch; }
.site nav a { display: flex; align-items: center; gap: 5px; border-bottom: 6px solid transparent; margin: 13px 0; padding-top: 7px; }
.site nav .active { color: #ff0036; border-bottom-color: #ff0036; }
.site nav svg { width: 14px; height: 14px; }
.login { margin-left: auto; margin-right: 27px; }
.site button svg { width: 26px; height: 26px; }
main { padding: 0 100px 51px; margin-top: -109px; }
.card { background: #fff; padding: 25px; display: flex; gap: 38px; box-shadow: 0 1px 2px rgba(0, 0, 0, .2); }
.author { width: 300px; background: #f0f1f6; border-radius: 3px; display: flex; flex-direction: column; align-items: center; padding-bottom: 74px; }
.avatar { position: relative; width: 160px; height: 160px; border-radius: 50%; background: #50e878; color: #fff; font: 64px/154px "Liberation Sans", sans-serif; text-align: center; }
.badge { background: #2d2d2d; color: #fff; border-radius: 3px; font: 16px/26px "Open Sans", sans-serif; padding: 0 7px; }
.badge.online { position: absolute; left: 0; bottom: 0; background: #090; }
.name { font-size: 25px; line-height: 34px; color: #000; margin: 13px 0 9px; }
dl { display: flex; justify-content: space-between; align-self: stretch; margin: 25px 25px 0; line-height: 24px; font-size: 16px; }
dt { color: #000; }
dt i { font-style: normal; color: #777; }
dd { margin: 0; }
.post { flex: 1; display: flex; flex-direction: column; justify-content: flex-end; }
.post p { margin: 0 0 25px; font-size: 20px; line-height: 30px; }
.smiley { display: inline-block; width: 28px; height: 28px; margin-left: 2px; vertical-align: -8px; margin-top: -8px; }
.post footer { height: 53px; background: #f0f1f6; border-radius: 3px; display: flex; justify-content: flex-end; align-items: center; padding-right: 6px; }
.post footer button { width: 40px; height: 39px; background: #fff; border-radius: 3px; justify-content: center; }
.post footer svg { width: 19px; height: 19px; }
.bottom { flex: 1; background: #f0f1f6; padding: 75px 100px 0; }
.bottom h2 { margin: 0; font-weight: 400; font-size: 25px; line-height: 34px; }
.share { display: flex; gap: 7px; margin: 23px 0 75px; }
.share button { height: 49px; border: 2px solid #fff; border-radius: 3px; padding: 0 17px 0 22px; gap: 9px; color: #fff; font-size: 20px; }
.share svg { width: 22px; height: 22px; }
.fb { background: #3b5998; }
.tw { background: #55acee; }
.wa { background: #25d366; }
.po { background: #ed4058; }
.topic { display: flex; gap: 14px; margin-top: 23px; line-height: 24px; color: #000; }
.topic p { margin: 0; }
.topic .meta { display: flex; gap: 7px; }
.topic span { color: #444; }
.ttl { display: block; font-size: 20px; line-height: 30px; }
.mini { width: 60px; height: 60px; border-radius: 50%; background: #c05c8d; color: #fff; font: 26px/58px "Liberation Sans", sans-serif; text-align: center; }
.totop { position: absolute; right: 13px; bottom: 12px; width: 49px; height: 49px; background: #ff0036; border-radius: 3px; justify-content: center; }
.totop svg { width: 24px; height: 24px; }
.scrollbar { width: 20px; background: #f0f0f0; border-left: 1px solid #fff; display: flex; flex-direction: column; }
.scrollbar svg { width: 19px; height: 20px; }
.track { flex: 1; display: flex; flex-direction: column; justify-content: flex-end; padding-bottom: 39px; }
.thumb { height: 23%; background: #cdcdcd; }

/* add-on bar */
.statusbar { height: 35px; flex: none; background: #e3e4e6; display: flex; justify-content: flex-end; align-items: center; gap: 17px; padding: 0 9px; }
.ext { position: relative; }
.ext b { position: absolute; left: 11px; top: -9px; width: 17px; height: 17px; border-radius: 2px; font: 700 14px/17px "Open Sans", sans-serif; color: #fff; text-align: center; }
.purple { background: #8b008b; }
.gray { background: #666; }
.ext .red { background: #ee3030; color: #000; }

/* taskbar */
.taskbar { height: 38px; flex: none; background: #2d3237; color: #fff; display: flex; align-items: stretch; padding: 0 6px 0 0; }
.taskbar > button { width: 46px; justify-content: center; }
.taskbar > button.task { width: 190px; justify-content: flex-start; padding-left: 5px; gap: 5px; border-bottom: 3px solid #9ab0bd; padding-top: 3px; font-size: 14px; white-space: nowrap; margin-right: 6px; }
.taskbar > .mail { margin-left: 7px; }
.taskbar > .first { margin-left: 5px; }
.taskbar > button.current { width: 200px; background: #3a4246; padding-left: 10px; }
.tray { margin-left: auto; display: flex; align-items: center; gap: 10px; padding-right: 24px; border-right: 1px solid #777; font-size: 14px; }
.tray time { margin: 0 13px 0 3px; }

/* context menus */
.ctx { position: absolute; background: #efefef; box-shadow: 2px 2px 2px #75777c; font-size: 18px; color: #000; }
.ctx.main { left: 924px; top: 443px; width: 325px; }
.ctx.sub { left: 1246px; top: 541px; width: 432px; }
.ctx > button { position: relative; width: 100%; height: 26px; background: #d3d3d3; padding: 2px 0 0 35px; line-height: 24px; white-space: nowrap; }
.ctx > .tall { height: 29px; padding: 0 0 0 4px; gap: 11px; }
.ctx hr { margin: 2px 0 2px 30px; border: 0; height: 1px; background: #d3d3d3; }
.ctxnav { height: 43px; display: flex; justify-content: space-around; align-items: center; border-bottom: 1px solid #d3d3d3; margin-bottom: 2px; }
.ctxnav .dim { color: #737373; }
.arr { width: 10px; height: 16px; margin-left: auto; margin-right: 8px; color: #444; }
```
